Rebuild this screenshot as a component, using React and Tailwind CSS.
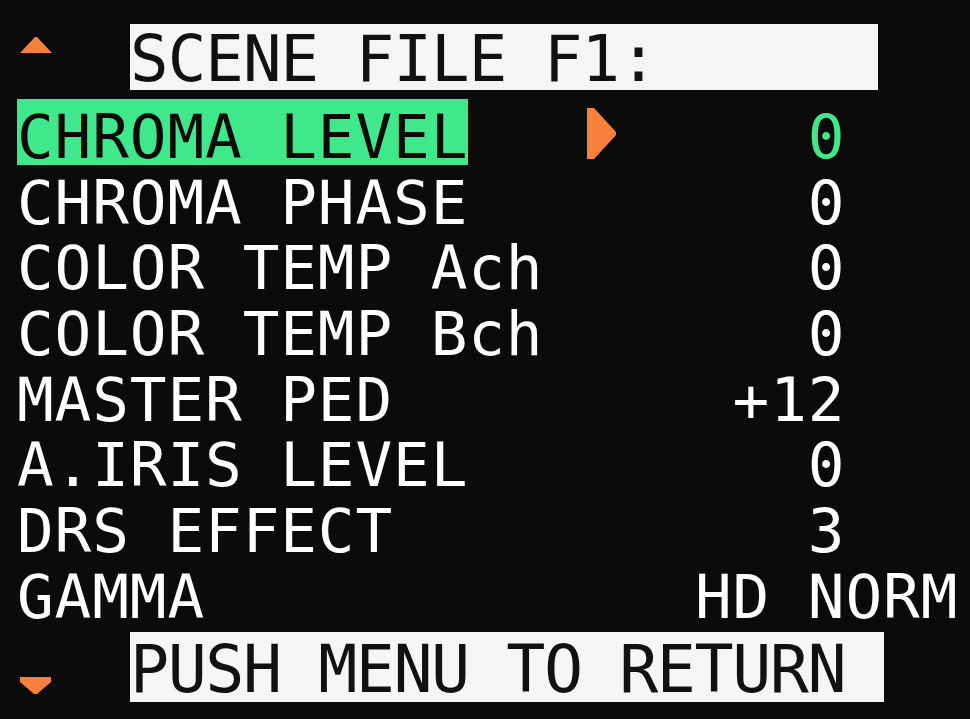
import React from 'react';

const items = [
    { label: 'CHROMA LEVEL', value: '   0', selected: true },
    { label: 'CHROMA PHASE', value: '   0' },
    { label: 'COLOR TEMP Ach', value: '   0' },
    { label: 'COLOR TEMP Bch', value: '   0' },
    { label: 'MASTER PED', value: ' +12' },
    { label: 'A.IRIS LEVEL', value: '   0' },
    { label: 'DRS EFFECT', value: '   3' },
    { label: 'GAMMA', value: 'HD NORM' },
];

function UpArrow() {
    return (
        <svg width="32" height="16" viewBox="0 0 32 16" className="block">
            <polygon points="0,16 32,16 17,0 15,0" fill="#f7813c" />
        </svg>
    );
}

function DownArrow() {
    return (
        <svg width="31" height="17" viewBox="0 0 31 17" className="block">
            <polygon points="0,0 31,0 31,5 17,17 14,17 0,5" fill="#f7813c" />
        </svg>
    );
}

function RightArrow() {
    return (
        <svg width="29" height="51" viewBox="0 0 29 51" className="block">
            <polygon points="0,0 7,0 29,24 29,27 7,51 0,51" fill="#f7813c" />
        </svg>
    );
}

export default function App() {
    return (
        <div className="h-[719px] w-[970px] overflow-hidden bg-[#0b0b0b] pl-[17px] pt-[24px] font-['DejaVu_Sans_Mono','Liberation_Mono',monospace] text-white">
            {/* title bar */}
            <div className="flex h-[66px]">
                <div className="w-[113px] pl-[3px] pt-[13px]">
                    <UpArrow />
                </div>
                <div className="h-[66px] w-[748px] whitespace-pre bg-[#f5f5f3] text-[64px] leading-[71px] tracking-[-0.9px] text-[#111]">
                    SCENE FILE F1:
                </div>
            </div>

            {/* menu rows */}
            <div className="mt-[9px]">
                {items.map((item) => (
                    <div key={item.label} className="flex h-[65.7px] text-[61px] leading-[75px] tracking-[0.88px]">
                        <div className="w-[570px]">
                            <div
                                className={
                                    item.selected
                                        ? 'h-[66px] w-fit whitespace-pre bg-[#3fe98b] text-[#0b0b0b]'
                                        : 'h-[66px] w-fit whitespace-pre'
                                }
                            >
                                {item.label}
                            </div>
                        </div>
                        <div className="w-[108px] pt-[9px]">{item.selected ? <RightArrow /> : null}</div>
                        <div
                            className={
                                item.selected
                                    ? 'h-[66px] whitespace-pre text-[#3fe98b]'
                                    : 'h-[66px] whitespace-pre'
                            }
                        >
                            {item.value}
                        </div>
                    </div>
                ))}
            </div>

            {/* footer bar */}
            <div className="mt-[7px] flex h-[70px]">
                <div className="w-[113px] pl-[3px] pt-[45px]">
                    <DownArrow />
                </div>
                <div className="h-[70px] w-[754px] whitespace-pre bg-[#f5f5f3] text-[65px] leading-[76px] tracking-[-1.5px] text-[#111]">
                    PUSH MENU TO RETURN
                </div>
            </div>
        </div>
    );
}
